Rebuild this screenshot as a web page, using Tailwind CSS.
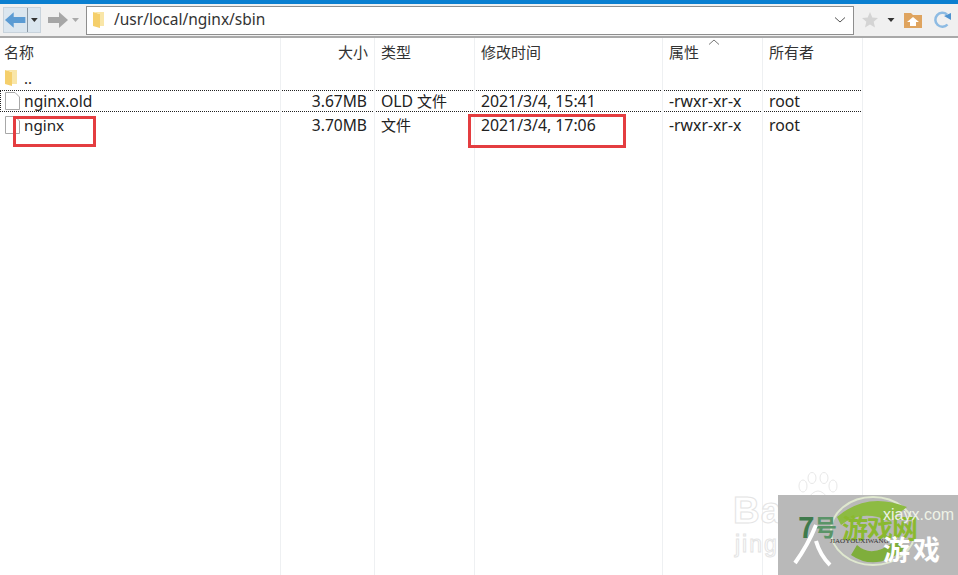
<!DOCTYPE html>
<html lang="zh"><head><meta charset="utf-8">
<script src="https://cdn.jsdelivr.net/npm/@tailwindcss/browser@4"></script>
</head>
<body class="bg-white">
<div class="relative w-[958px] h-[575px] overflow-hidden bg-white text-[15px] text-[#222] font-['Noto_Sans','Noto_Sans_CJK_SC',sans-serif]">
  <div class="h-1 bg-[#0a7fd0]"></div>
  <div class="h-[34px] bg-[#f0f0f0] border-b-2 border-[#a9a9a9] flex items-center pl-[3px]">
    <div class="w-[38px] h-[26px] flex items-center bg-[#dbe6ef] border border-[#c8d3dc]">
      <svg width="24" height="20" viewBox="0 0 24 20"><path d="M1 10 L10 2 V7 H22 V13 H10 V18 Z" fill="#5b9bd3"/></svg>
      <div class="w-px h-full bg-[#8a97a3]"></div>
      <svg width="10" height="6" viewBox="0 0 10 6" class="ml-[2px]"><path d="M1 1H8L4.500 5Z" fill="#333"/></svg>
    </div>
    <svg width="22" height="20" viewBox="0 0 22 20" class="ml-[6px]"><path d="M21 10 L12 2 V7 H1 V13 H12 V18 Z" fill="#a6a6a6"/></svg>
    <svg width="10" height="6" viewBox="0 0 10 6" class="ml-[2px]"><path d="M1 1H8L4.500 5Z" fill="#aaa"/></svg>
    <div class="ml-[5px] w-[768px] h-[29px] bg-white border border-[#8e8e8e] flex items-center">
      <svg width="14" height="18" viewBox="0 0 14 18" class="ml-[4px]"><path d="M2 1 L9 3 V17 L2 15Z" fill="#f5cf6b"/><path d="M2 1 H13 V15 H9 V3Z" fill="#f9e6a8"/></svg>
      <span class="ml-[9px] text-[#333] text-[15.500px]">/usr/local/nginx/sbin</span>
      <svg width="12" height="8" viewBox="0 0 12 8" class="ml-auto mr-[7px]"><path d="M1 1.500 L6 6 L11 1.500" fill="none" stroke="#555" stroke-width="1"/></svg>
    </div>
    <svg width="18" height="18" viewBox="0 0 18 18" class="ml-[7px]"><path d="M9 1 L11.300 6.500 L17 7 L12.700 10.800 L14 16.500 L9 13.500 L4 16.500 L5.300 10.800 L1 7 L6.700 6.500Z" fill="#d4d4d4"/></svg>
    <svg width="8" height="6" viewBox="0 0 8 6" class="ml-[8px]"><path d="M0.500 1H7.500L4 5Z" fill="#333"/></svg>
    <svg width="20" height="18" viewBox="0 0 20 18" class="ml-[8px]"><path d="M1 2 H8 L10 4 H19 V17 H1Z" fill="#dfa45f"/><path d="M10 6 L16 11 H13 V15 H7 V11 H4Z" fill="#fff"/></svg>
    <svg width="20" height="20" viewBox="0 0 20 20" class="ml-[10px]"><path d="M14.500 14.500 A7 7 0 1 1 14 4.500" fill="none" stroke="#8dbbe3" stroke-width="2.500"/><path d="M11 6 L18 3 L18 10Z" fill="#4f93d0"/></svg>
  </div>

  <div class="relative">
    <div class="absolute top-0 left-0 w-[863px] h-[537px] grid grid-cols-[281px_94px_100px_188px_100px_100px] pointer-events-none">
      <div class="border-r border-[#eef0f2]"></div><div class="border-r border-[#eef0f2]"></div><div class="border-r border-[#eef0f2]"></div><div class="border-r border-[#eef0f2]"></div><div class="border-r border-[#eef0f2]"></div><div class="border-r border-[#eef0f2]"></div>
    </div>
    <div class="grid grid-cols-[281px_94px_100px_188px_100px_100px] w-[863px] h-[27px] pt-[4px] leading-[20px] text-[#333]">
      <div class="pl-[4px]">名称</div><div class="text-right pr-[7px]">大小</div><div class="pl-[6px]">类型</div><div class="pl-[6px]">修改时间</div><div class="relative pl-[6px]">属性<svg width="12" height="6" viewBox="0 0 12 6" class="absolute left-[45px] -top-[3px]"><path d="M1 5.500 L6 1 L11 5.500" fill="none" stroke="#777"/></svg></div><div class="pl-[6px]">所有者</div>
    </div>
    <div class="h-[25px] w-[863px] flex items-center pl-[4px]">
      <svg width="15" height="18" viewBox="0 0 15 18"><path d="M1 1 L8 3 V17 L1 15Z" fill="#f5cf6b"/><path d="M1 1 H13 V15 H8 V3Z" fill="#f9e6a8"/></svg>
      <span class="ml-[5px] leading-[20px]">..</span>
    </div>
    <div class="grid grid-cols-[281px_94px_100px_188px_100px_100px] w-[863px] h-[22px] items-center outline-1 outline-dotted -outline-offset-1 outline-[#222] leading-[20px]">
      <div class="flex items-center pl-[4px]"><svg width="16" height="18" viewBox="0 0 16 18"><path d="M1.500 0.500 H11 L15.500 5 V17.500 H1.500Z" fill="#fff" stroke="#a8a8a8"/></svg><span class="ml-[4px] text-[15.600px]">nginx.old</span></div>
      <div class="text-right pr-[8px] text-[15.600px]">3.67MB</div><div class="pl-[6px]"><span class="text-[15.800px]">OLD</span> 文件</div><div class="pl-[6px] text-[15.800px]">2021/3/4, 15:41</div><div class="pl-[6px] text-[15.800px]">-rwxr-xr-x</div><div class="pl-[6px] text-[15.800px]">root</div>
    </div>
    <div class="grid grid-cols-[281px_94px_100px_188px_100px_100px] w-[863px] h-[25px] items-center leading-[20px]">
      <div class="flex items-center pl-[4px]"><svg width="16" height="18" viewBox="0 0 16 18"><path d="M1.500 0.500 H11 L15.500 5 V17.500 H1.500Z" fill="#fff" stroke="#a8a8a8"/></svg><span class="ml-[4px] text-[15.200px]">nginx</span></div>
      <div class="text-right pr-[8px] text-[15.600px]">3.70MB</div><div class="pl-[6px]">文件</div><div class="pl-[6px] text-[15.800px]">2021/3/4, 17:06</div><div class="pl-[6px] text-[15.800px]">-rwxr-xr-x</div><div class="pl-[6px] text-[15.800px]">root</div>
    </div>
  </div>

  <div class="absolute left-[13px] top-[116px] w-[83px] h-[31px] border-[3px] border-[#e43d40]"></div>
  <div class="absolute left-[468px] top-[114px] w-[158px] h-[34px] border-[3px] border-[#e43d40]"></div>

  <!-- Baidu watermark -->
  <div class="absolute left-[733px] top-[490px] text-transparent [-webkit-text-stroke:1px_#e4e4e4] text-[37px] leading-[42px] font-bold tracking-[1px] font-['Liberation_Sans',sans-serif]">Bai</div>
  <div class="absolute left-[735px] top-[530px] text-transparent [-webkit-text-stroke:1px_#e4e4e4] text-[23px] leading-[28px] tracking-[2px] font-['Liberation_Sans',sans-serif]">jing</div>
  <svg width="42" height="30" viewBox="0 0 42 30" class="absolute left-[797px] top-[472px]" fill="none" stroke="#e8e8e8"><ellipse cx="6" cy="14" rx="4" ry="6"/><ellipse cx="15" cy="6" rx="4" ry="5.500"/><ellipse cx="27" cy="6" rx="4" ry="5.500"/><ellipse cx="36" cy="14" rx="4" ry="6"/><path d="M10 28 Q21 10 32 28"/></svg>

  <!-- 7号游戏网 watermark -->
  <div class="absolute left-[778px] top-[495px] w-[180px] h-[80px] bg-[#b9b9b9] overflow-hidden font-['Noto_Sans_CJK_SC',sans-serif]">
    <svg width="100" height="76" viewBox="0 0 100 76" class="absolute left-[49px] top-0">
      <ellipse cx="46" cy="36" rx="42" ry="34" fill="none" stroke="#dfe8cf" stroke-width="2"/>
      <path d="M10 22 Q40 -4 80 12 L62 26 Q35 14 14 30Z" fill="#8dbb42"/>
      <path d="M24 60 Q50 78 80 52 L68 46 Q45 64 30 50Z" fill="#7fae3c"/>
    </svg>
    <span class="absolute left-[20px] top-[13px] text-[28px] leading-[36px] font-bold text-[#3f7a4c]">7</span>
    <span class="absolute left-[36px] top-[15px] text-[23px] leading-[32px] font-bold text-[#5a9468]">号</span>
    <span class="absolute left-[64px] top-[16px] text-[26px] leading-[32px] tracking-[-1px] font-bold text-[#8ab92f]">游戏网</span>
    <span class="absolute left-[105px] top-[11px] text-[16px] leading-[18px] text-[#eef2e6] font-['Liberation_Sans',sans-serif]">xiayx.com</span>
    <span class="absolute left-[52px] top-[41px] text-[7px] leading-[10px] text-[#333] font-['Liberation_Serif',serif]">JIAOYOUXIWANG</span>
    <span class="absolute left-[105px] top-[36px] text-[27px] leading-[36px] font-bold tracking-[3px] text-white">游戏</span>
    <svg width="40" height="50" viewBox="0 0 40 50" class="absolute left-[14px] top-[28px]"><path d="M24 2 Q16 22 3 40 M24 18 Q28 32 38 42" fill="none" stroke="#fff" stroke-width="4"/></svg>
  </div>
</div>
</body></html>
